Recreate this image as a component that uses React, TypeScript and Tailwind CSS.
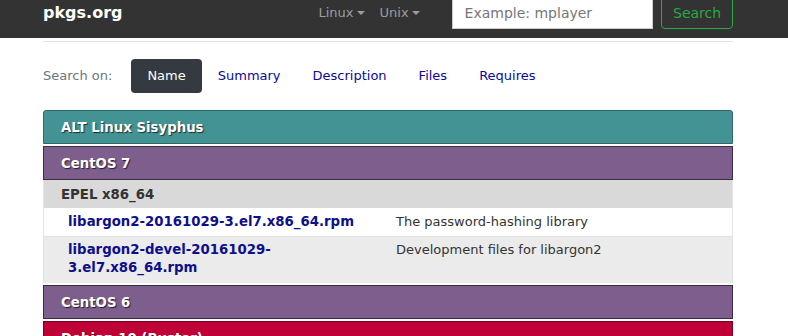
export default function App() {
  const tabs = ["Summary", "Description", "Files", "Requires"];

  return (
    <div className="min-h-screen bg-white font-['DejaVu_Sans',sans-serif] text-[13px] text-[#333]">
      {/* Navbar */}
      <div className="h-[38px] bg-[#333333]">
        <div className="flex items-start pl-[43px] pr-[55px]">
          <div className="text-[16px] font-bold leading-[26px] text-white">pkgs.org</div>
          <div className="ml-[196px] flex items-center gap-[15px] leading-[26px] text-[#9d9d9d]">
            <span className="flex items-center">
              Linux
              <span className="ml-[3px] h-0 w-0 border-x-[4px] border-t-[4px] border-x-transparent border-t-[#9d9d9d]"></span>
            </span>
            <span className="flex items-center">
              Unix
              <span className="ml-[3px] h-0 w-0 border-x-[4px] border-t-[4px] border-x-transparent border-t-[#9d9d9d]"></span>
            </span>
          </div>
          <div className="ml-[32px] mt-[-6px] flex h-[35px] w-[202px] items-center border border-[#ccc] bg-white pl-[12px] pt-[4px] text-[14px] text-[#777]">
            Example: mplayer
          </div>
          <div className="ml-[8px] mt-[-6px] flex h-[35px] w-[72px] items-center justify-center rounded-[4px] border border-[#28a745] pt-[4px] text-[14px] text-[#28a745]">
            Search
          </div>
        </div>
      </div>

      <div className="mx-[43px] w-[690px]">
        <div className="mt-[3px] h-px bg-[#e5e5e5]"></div>

        {/* Search on */}
        <div className="mt-[17px] flex items-center">
          <span className="text-[#6c757d]">Search on:</span>
          <span className="ml-[19px] flex h-[34px] items-center rounded-[4px] bg-[#343a40] px-4 text-white">Name</span>
          {tabs.map((t) => (
            <span key={t} className="px-4 text-[#0a0a96]">
              {t}
            </span>
          ))}
        </div>

        {/* Results */}
        <div className="mt-[17px] flex flex-col gap-[2px]">
          <div className="rounded-t-[3px] border border-[#2f6668] bg-[#439395] px-[17px] pb-[6px] pt-[8px] text-[13.3px] font-bold leading-[18px] text-white [text-shadow:1px_1px_1px_#1f2f30]">
            ALT Linux Sisyphus
          </div>
          <div className="flex flex-col">
            <div className="border border-[#3b2c43] bg-[#7e5e8c] px-[17px] pb-[6px] pt-[8px] text-[13.3px] font-bold leading-[18px] text-white [text-shadow:1px_1px_1px_#2a1d30]">
              CentOS 7
            </div>
            <div className="border-x border-[#e5e5e5] bg-[#d9d9d9] px-[17px] pb-[4px] pt-[6px] text-[13.3px] font-bold leading-[18px] text-[#333]">
              EPEL x86_64
            </div>
            <div className="flex border-x border-[#e5e5e5] bg-white py-[5px] leading-[18px]">
              <div className="w-[328px] pl-[24px] text-[13.3px] font-bold text-[#0f0f8c]">libargon2-20161029-3.el7.x86_64.rpm</div>
              <div className="pl-[24px]">The password-hashing library</div>
            </div>
            <div className="flex border-x border-t border-[#e2e2e2] bg-[#ebebeb] pb-[6px] pt-[4px] leading-[18px]">
              <div className="w-[328px] pl-[24px] pr-[20px] text-[13.3px] font-bold text-[#0f0f8c]">libargon2-devel-20161029-3.el7.x86_64.rpm</div>
              <div className="pl-[24px]">Development files for libargon2</div>
            </div>
          </div>
          <div className="border border-[#3b2c43] bg-[#7e5e8c] px-[17px] pb-[6px] pt-[8px] text-[13.3px] font-bold leading-[18px] text-white [text-shadow:1px_1px_1px_#2a1d30]">
            CentOS 6
          </div>
          <div className="border border-[#7a0023] bg-[#bf0037] px-[17px] pb-[6px] pt-[8px] text-[13.3px] font-bold leading-[18px] text-white [text-shadow:1px_1px_1px_#50001a]">
            Debian 10 (Buster)
          </div>
        </div>
      </div>
    </div>
  );
}
